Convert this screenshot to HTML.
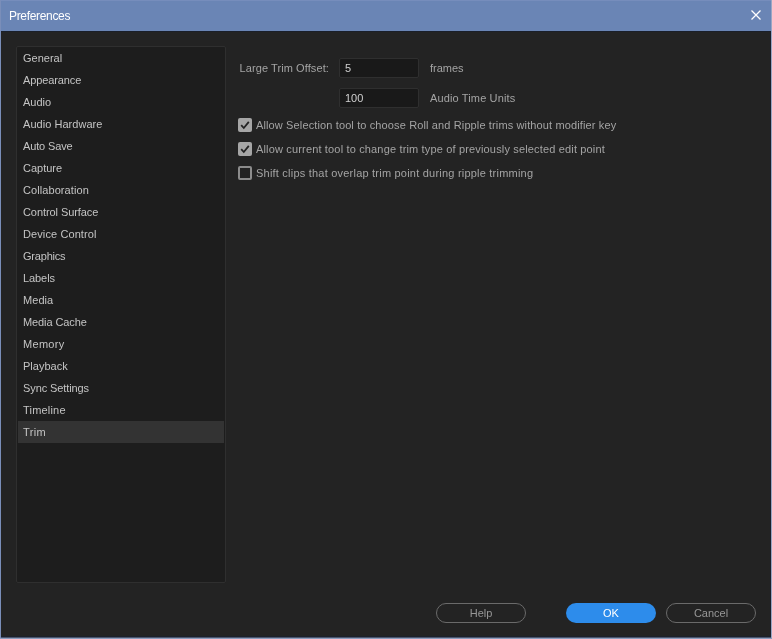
<!DOCTYPE html>
<html><head><meta charset="utf-8"><title>Preferences</title>
<style>
*{box-sizing:border-box;margin:0;padding:0}
html,body{width:772px;height:639px;overflow:hidden;background:#232323}
body{font-family:"Liberation Sans",sans-serif;font-size:11px;color:#bdbdbd;position:relative}
#win{position:absolute;left:0;top:0;width:772px;height:639px;background:#232323}
#txt{position:absolute;left:0;top:0;width:772px;height:639px;will-change:transform}
#titlebg{position:absolute;left:0;top:0;width:772px;height:31px;background:#6a85b5}
#title{position:absolute;left:9px;top:0;color:#fff;font-size:12px;line-height:33px;letter-spacing:-0.33px;white-space:nowrap}
#bl{position:absolute;left:0;top:0;width:1px;height:639px;background:#7a8eb9}
#bt{position:absolute;left:0;top:0;width:772px;height:1px;background:#768dbc}
#br{position:absolute;left:771px;top:0;width:1px;height:639px;background:#9aa6c4}
#bb{position:absolute;left:0;top:638px;width:772px;height:1px;background:#8d9dbf}
#bb2{position:absolute;left:1px;top:636px;width:770px;height:2px;background:linear-gradient(#1b212c 50%,#4c566c 50%)}
#br2{position:absolute;left:770px;top:31px;width:1px;height:606px;background:#1c212b}
#bt2{position:absolute;left:1px;top:31px;width:770px;height:1px;background:#1a1f29}
#close{position:absolute;left:751px;top:10px;width:10px;height:10px}
#listbg{position:absolute;left:16px;top:46px;width:210px;height:537px;background:#1d1d1d;border:1px solid #2f2f2f;border-radius:2px}
#selbg{position:absolute;left:18px;top:421px;width:206px;height:22px;background:#333}
#list{position:absolute;left:23px;top:47px}
#list div{height:22px;line-height:22px;color:#c4c4c4;white-space:nowrap}
.lbl{position:absolute;color:#a4a4a4;white-space:nowrap;line-height:14px}
.inpbg{position:absolute;width:80px;height:20px;background:#191919;border:1px solid #2f2f2f;border-radius:2px}
.inp{position:absolute;color:#d0d0d0;line-height:14px;white-space:nowrap}
.cb{position:absolute;width:14px;height:14px;border-radius:2px}
.cb.on{background:#a6a6a6}
.cb.off{border:2px solid #8c8c8c}
.btnbg{position:absolute;top:603px;width:90px;height:20px;border-radius:10px}
.btnbg.o{border:1px solid #6a6a6a}
.btnbg.p{background:#2d8ceb}
.btn{position:absolute;top:605px;width:90px;text-align:center;line-height:16px;font-size:11px;color:#979797}
</style></head><body>
<div id="win">
<div id="titlebg"></div>
<svg id="close" viewBox="0 0 10 10"><path d="M0.5 0.5L9.5 9.5M9.5 0.5L0.5 9.5" stroke="#fff" stroke-width="1.25" fill="none"/></svg>
<div id="bb2"></div><div id="br2"></div><div id="bt2"></div><div id="bt"></div><div id="bl"></div><div id="br"></div><div id="bb"></div>
<div id="listbg"></div>
<div id="selbg"></div>
<div class="inpbg" style="left:339px;top:58px"></div>
<div class="inpbg" style="left:339px;top:88px"></div>
<div class="cb on" style="left:238px;top:118px"><svg width="14" height="14" viewBox="0 0 14 14"><path d="M3.2 7.2L5.8 10L10.8 3.9" stroke="#232323" stroke-width="1.8" fill="none"/></svg></div>
<div class="cb on" style="left:238px;top:142px"><svg width="14" height="14" viewBox="0 0 14 14"><path d="M3.2 7.2L5.8 10L10.8 3.9" stroke="#232323" stroke-width="1.8" fill="none"/></svg></div>
<div class="cb off" style="left:238px;top:166px"></div>
<div class="btnbg o" style="left:436px"></div>
<div class="btnbg p" style="left:566px"></div>
<div class="btnbg o" style="left:666px"></div>
<div id="txt">
<div id="title">Preferences</div>
<div id="list">
<div>General</div>
<div style="letter-spacing:-0.12px">Appearance</div>
<div>Audio</div>
<div style="letter-spacing:0.04px">Audio Hardware</div>
<div style="letter-spacing:-0.14px">Auto Save</div>
<div>Capture</div>
<div style="letter-spacing:0.08px">Collaboration</div>
<div style="letter-spacing:-0.08px">Control Surface</div>
<div style="letter-spacing:0.1px">Device Control</div>
<div style="letter-spacing:-0.2px">Graphics</div>
<div style="letter-spacing:-0.08px">Labels</div>
<div style="letter-spacing:0.07px">Media</div>
<div style="letter-spacing:-0.1px">Media Cache</div>
<div style="letter-spacing:0.3px">Memory</div>
<div>Playback</div>
<div style="letter-spacing:-0.1px">Sync Settings</div>
<div style="letter-spacing:0.2px">Timeline</div>
<div style="letter-spacing:0.35px">Trim</div>
</div>
<div class="lbl" style="left:239.5px;top:61px;letter-spacing:0.09px">Large Trim Offset:</div>
<div class="inp" style="left:345px;top:61px">5</div>
<div class="lbl" style="left:430px;top:61px">frames</div>
<div class="inp" style="left:345px;top:91px">100</div>
<div class="lbl" style="left:430px;top:91px;letter-spacing:0.14px">Audio Time Units</div>
<div class="lbl" style="left:256px;top:118px;letter-spacing:0.128px">Allow Selection tool to choose Roll and Ripple trims without modifier key</div>
<div class="lbl" style="left:256px;top:142px;letter-spacing:0.159px">Allow current tool to change trim type of previously selected edit point</div>
<div class="lbl" style="left:256px;top:166px;letter-spacing:0.216px">Shift clips that overlap trim point during ripple trimming</div>
<div class="btn" style="left:436px">Help</div>
<div class="btn" style="left:566px;color:#fff">OK</div>
<div class="btn" style="left:666px">Cancel</div>
</div>
</div>
</body></html>
